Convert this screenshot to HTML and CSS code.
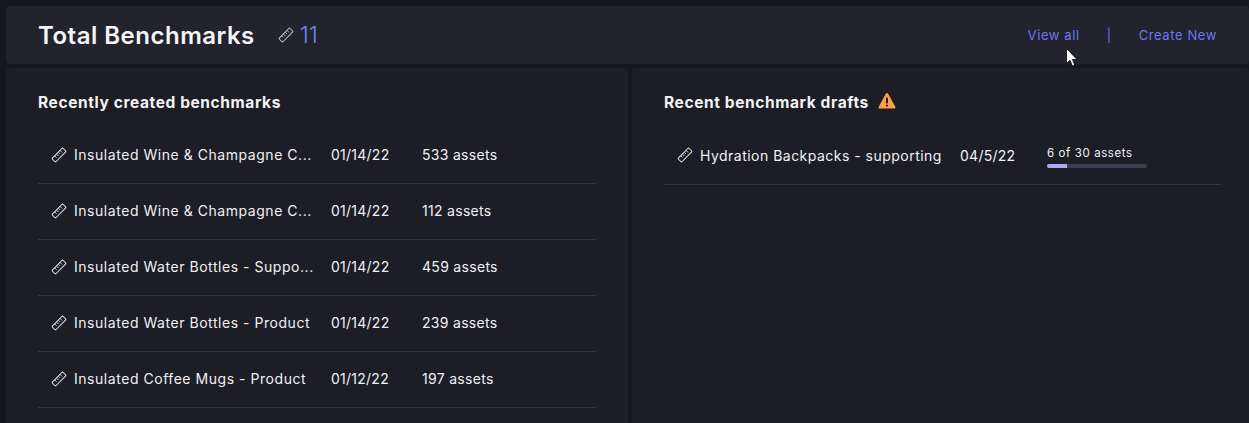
FILE: index.html
```html
<!DOCTYPE html>
<html lang="en">
<head>
<meta charset="utf-8">
<title>Total Benchmarks</title>
<link rel="stylesheet" href="styles.css">
</head>
<body>
<svg class="defs" width="0" height="0" aria-hidden="true">
  <symbol id="ruler" viewBox="0 0 16 16">
    <g fill="none" stroke="currentColor" stroke-width="1" stroke-linejoin="round" stroke-linecap="round">
      <rect x="-2.6" y="-7.6" width="5.2" height="15.2" rx="1" transform="translate(8 8) rotate(45)"/>
      <path d="M9.4 3.8l1.4 1.4M7.6 5.6l1 1M5.8 7.4l1.4 1.4M4 9.2l1 1"/>
    </g>
  </symbol>
</svg>
<header class="topbar">
  <div class="topbar-left">
    <h1 class="page-title">Total Benchmarks</h1>
    <svg class="icon icon-top"><use href="#ruler"/></svg>
    <span class="count">11</span>
  </div>
  <nav class="links">
    <a class="link">View all</a>
    <span class="sep">|</span>
    <a class="link">Create New</a>
  </nav>
  <svg class="cursor" width="12" height="19" viewBox="0 0 12 19"><path d="M0.5 0.5V15.5L4 12.3L6.4 18L8.8 17L6.4 11.5H11Z" fill="#fff" stroke="#000" stroke-width="0.8"/></svg>
</header>
<main class="panels">
  <section class="panel">
    <h2 class="panel-title">Recently created benchmarks</h2>
    <ul class="list">
      <li class="row"><svg class="icon"><use href="#ruler"/></svg><span class="name">Insulated Wine &amp; Champagne C...</span><span class="date">01/14/22</span><span class="assets">533 assets</span></li>
      <li class="row"><svg class="icon"><use href="#ruler"/></svg><span class="name">Insulated Wine &amp; Champagne C...</span><span class="date">01/14/22</span><span class="assets">112 assets</span></li>
      <li class="row"><svg class="icon"><use href="#ruler"/></svg><span class="name">Insulated Water Bottles - Suppo...</span><span class="date">01/14/22</span><span class="assets">459 assets</span></li>
      <li class="row"><svg class="icon"><use href="#ruler"/></svg><span class="name">Insulated Water Bottles - Product</span><span class="date">01/14/22</span><span class="assets">239 assets</span></li>
      <li class="row"><svg class="icon"><use href="#ruler"/></svg><span class="name">Insulated Coffee Mugs - Product</span><span class="date">01/12/22</span><span class="assets">197 assets</span></li>
    </ul>
  </section>
  <section class="panel panel-right">
    <h2 class="panel-title">Recent benchmark drafts
      <svg class="warn" width="18" height="18" viewBox="0 0 18 18"><path d="M9 1c.5 0 .9.3 1.2.7l7.2 13.2c.4.8-.1 1.6-1 1.6H1.6c-.9 0-1.4-.8-1-1.6L7.8 1.7C8.1 1.3 8.5 1 9 1z" fill="#fa9f47"/><rect x="8" y="5.6" width="2" height="6" rx=".8" fill="#1c1d25"/><circle cx="9" cy="13.6" r="1.1" fill="#1c1d25"/></svg>
    </h2>
    <ul class="list">
      <li class="row row-draft"><svg class="icon"><use href="#ruler"/></svg><span class="name-draft">Hydration Backpacks - supporting</span><span class="date-draft">04/5/22</span>
        <div class="progress"><span class="progress-label">6 of 30 assets</span><div class="track"><div class="fill" style="width:20%"></div></div></div>
      </li>
    </ul>
  </section>
</main>
</body>
</html>
```

FILE: styles.css
```css
* { box-sizing: border-box; }
html, body { height: 100%; }
body {
  margin: 0;
  padding: 6px 0 0 6px;
  background: #16171c;
  color: #f1f1f4;
  font-family: "Inter", "Noto Sans", sans-serif;
  overflow: hidden;
}
.defs { position: absolute; }
.topbar {
  position: relative;
  height: 58px;
  background: #22232c;
  border-radius: 4px;
  display: flex;
  align-items: center;
  justify-content: space-between;
  padding: 0 32px;
}
.topbar-left { display: flex; align-items: center; }
.page-title { margin: 0; font-size: 24px; font-weight: 600; letter-spacing: .5px; color: #f5f5f7; }
.icon { width: 16px; height: 16px; color: #e8e8ec; flex: none; }
.icon-top { margin-left: 23px; color: #c4c5cc; }
.count { margin-left: 6px; font-size: 23px; font-weight: 300; color: #7285f0; }
.links { display: flex; align-items: center; font-size: 13px; color: #6d78ee; letter-spacing: .6px; }
.sep { margin: 0 27px; }
.cursor { position: absolute; left: 1060px; top: 42px; }
.panels { display: flex; gap: 4px; margin-top: 4px; height: 360px; }
.panel {
  width: 622px;
  background: #1c1d25;
  border-radius: 4px 4px 0 0;
  padding: 24px 32px 0;
}
.panel-right { flex: 1; padding-right: 28px; }
.panel-title {
  margin: 0;
  height: 20px;
  display: flex;
  align-items: center;
  gap: 9px;
  font-size: 15.5px;
  font-weight: 700;
  letter-spacing: .6px;
  color: #f3f3f5;
}
.warn { flex: none; margin-top: -2px; }
.list { list-style: none; margin: 16px 0 0; padding: 0; }
.row {
  height: 56px;
  display: flex;
  align-items: center;
  padding-left: 13px;
  padding-bottom: 2px;
  border-bottom: 1px solid #33343e;
  font-size: 14px;
}
.name { width: 257px; margin-left: 7px; white-space: nowrap; letter-spacing: .54px; }
.date { width: 91px; letter-spacing: .25px; }
.assets { letter-spacing: .3px; }
.row-draft { height: 57px; }
.name-draft { width: 260px; margin-left: 7px; white-space: nowrap; letter-spacing: .48px; }
.date-draft { width: 87px; letter-spacing: .25px; }
.progress { display: flex; flex-direction: column; width: 100px; margin-top: 3px; }
.progress-label { font-size: 11.5px; line-height: 14px; letter-spacing: .6px; }
.track { height: 4px; margin-top: 4px; border-radius: 2px; background: #3e3e52; overflow: hidden; }
.fill { height: 100%; background: #a8aeef; }
```
